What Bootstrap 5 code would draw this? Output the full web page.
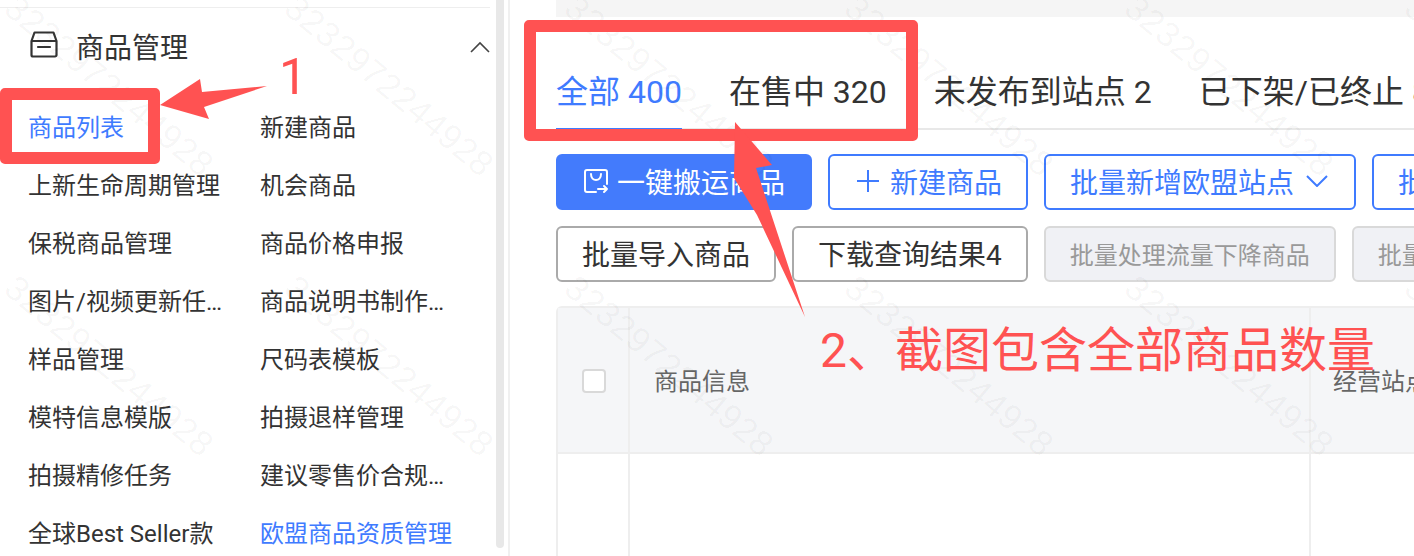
<!DOCTYPE html>
<html lang="zh-CN">
<head>
<meta charset="utf-8">
<title>商品列表</title>
<link href="https://cdn.jsdelivr.net/npm/bootstrap@5.3.0/dist/css/bootstrap.min.css" rel="stylesheet">
<style>
html,body{height:556px;overflow:hidden}
body{font-family:Roboto,"Noto Sans CJK SC","Liberation Sans",sans-serif;color:#333;background:#fff;position:relative;line-height:1.4}
.pg{width:1414px;height:556px;overflow:hidden}
.side{width:496px;flex:none;padding-top:7px}
.side-top{height:1px;background:#eee;margin-right:6px}
.side-head{height:78px;padding:0 6px 0 30px;font-size:28px;color:#333}
.side-head .boxi{margin:0 18px 6px 0}
.side-ttl{padding-top:4px}
.menu-grid{display:grid;grid-template-columns:232px 232px;padding-left:28px;margin-top:13px}
.menu-item{height:58px;line-height:58px;font-size:24px;color:#333;width:196px;text-decoration:none;white-space:nowrap;overflow:hidden;text-overflow:ellipsis}
.menu-item.on{color:#3f7bff}
.sbar{width:8px;height:548px;background:#e8e8e8;border-radius:0 0 4px 4px;flex:none}
.sline{width:2px;margin-left:4px;background:#f0f0f0;flex:none}
.mainp{flex:1 1 auto;min-width:0;overflow:hidden}
.topb{height:17px;background:#f5f5f5;margin-left:46px}
.tabsb{margin:42px 0 0 46px;height:71px;border-bottom:2px solid #e8e8e8;flex-wrap:nowrap;gap:47px;width:1200px}
.tabi{font-size:32px;line-height:66px;height:71px;color:#333;white-space:nowrap;padding:0;text-decoration:none;flex:none}
.tabi.on{color:#3f7bff;border-bottom:2px solid #3f7bff}
.btnrow{margin:24px 0 0 46px;gap:16px;flex-wrap:nowrap;width:1200px}
.btnrow+.btnrow{margin-top:16px}
.bx{height:56px;padding:4px 24px 0;font-size:28px;line-height:1;border-width:2px;border-radius:6px;flex:none;white-space:nowrap;display:inline-flex;align-items:center;--bs-btn-color:#3f7bff;--bs-btn-border-color:#3f7bff}
.bx svg{position:relative;top:-3px}
.bx.solid{background:#437bfc;border-color:#437bfc;color:#fff;padding:4px 25px 0}
.bx.ghost{border-color:#aaa;color:#333;background:#fff}
.bx.dis{background:#f0f1f5;border-color:#d9d9d9;color:#999;font-size:24px;opacity:1}
.ic-plus{margin:0 11px 0 3px}
.ic-chev{margin:0 2px 0 12px}
.tblw{margin:24px 0 0 46px;width:1000px;border:2px solid #eee;border-bottom:0;border-radius:6px 6px 0 0;height:260px}
.colck{width:72px;flex:none;border-right:2px solid #eee;padding:2px 0 0 2px}
.colinf{width:681px;flex:none;border-right:2px solid #eee;padding:5px 0 0 24px}
.hrow{height:146px;background:#f5f6f8;border-bottom:2px solid #eee;font-size:24px;color:#666}
.brow{height:110px}
.ckb{width:24px;height:24px;border:2px solid #d9d9d9;background:#fff;border-radius:4px}
.lastc{padding:5px 0 0 22px;white-space:nowrap}
.wm{position:absolute;left:-30px;top:-55px;width:1680px;display:flex;flex-wrap:wrap;pointer-events:none}
.wmc{width:280px;height:280px;display:flex;align-items:center;justify-content:center}
.wmc span{transform:rotate(40deg);font-size:35px;color:rgba(0,0,0,.04);white-space:nowrap;font-family:"Liberation Sans",sans-serif;letter-spacing:.5px}
.mk{position:absolute;border:12px solid #ff5252;border-radius:5px;pointer-events:none}
.mk1{left:0;top:88px;width:160px;height:76px}
.mk2{left:524px;top:20px;width:394px;height:121px}
.arrs{position:absolute;left:0;top:0;pointer-events:none}
.nt{position:absolute;color:#ff5252;line-height:1;white-space:nowrap}
.nt1{left:279px;top:52px;font-size:50px}
.nt2{left:820px;top:327px;font-size:48px}
</style>
</head>
<body>
<div class="pg d-flex">
  <aside class="side">
    <div class="side-top"></div>
    <div class="side-head d-flex align-items-center">
      <svg class="boxi" width="28" height="27" viewBox="0 0 28 27" fill="none" stroke="#333" stroke-width="2.2" stroke-linejoin="round" stroke-linecap="round"><path d="M1.5 10V24a1.5 1.5 0 0 0 1.5 1.5h22a1.5 1.5 0 0 0 1.5-1.5V10L23.5 1.5H4.5ZM1.5 10h25M8 16h12"/></svg>
      <span class="side-ttl">商品管理</span>
      <svg class="ms-auto" width="20" height="12" viewBox="0 0 20 12" fill="none" stroke="#444" stroke-width="1.6"><path d="M1 11 10 2l9 9"/></svg>
    </div>
    <nav class="menu-grid">
      <a class="menu-item on" href="#">商品列表</a><a class="menu-item" href="#">新建商品</a>
      <a class="menu-item" href="#">上新生命周期管理</a><a class="menu-item" href="#">机会商品</a>
      <a class="menu-item" href="#">保税商品管理</a><a class="menu-item" href="#">商品价格申报</a>
      <a class="menu-item" href="#">图片/视频更新任务</a><a class="menu-item" href="#">商品说明书制作工具</a>
      <a class="menu-item" href="#">样品管理</a><a class="menu-item" href="#">尺码表模板</a>
      <a class="menu-item" href="#">模特信息模版</a><a class="menu-item" href="#">拍摄退样管理</a>
      <a class="menu-item" href="#">拍摄精修任务</a><a class="menu-item" href="#">建议零售价合规管理</a>
      <a class="menu-item" href="#">全球Best Seller款</a><a class="menu-item on" href="#">欧盟商品资质管理</a>
    </nav>
  </aside>
  <div class="sbar"></div>
  <div class="sline"></div>
  <main class="mainp">
    <div class="topb"></div>
    <div class="nav tabsb">
      <a class="tabi on" href="#">全部 400</a>
      <a class="tabi" href="#">在售中 320</a>
      <a class="tabi" href="#">未发布到站点 2</a>
      <a class="tabi" href="#">已下架/已终止 8</a>
    </div>
    <div class="d-flex btnrow">
      <button class="btn bx solid" type="button">
        <svg class="me-2" width="26" height="26" viewBox="0 0 26 26" fill="none" stroke="#fff" stroke-width="2" stroke-linecap="round" stroke-linejoin="round"><path d="M13 24H4a2 2 0 0 1-2-2V4a2 2 0 0 1 2-2h18a2 2 0 0 1 2 2v12M8 6c0 8 10 8 10 0M15 21h9M21 18l3 3-3 3"/></svg>
        一键搬运商品</button>
      <button class="btn btn-outline-primary bx" type="button">
        <svg class="ic-plus" width="22" height="22" viewBox="0 0 22 22" fill="none" stroke="#3f7bff" stroke-width="2"><path d="M11 0v22M0 11h22"/></svg>新建商品</button>
      <button class="btn btn-outline-primary bx" type="button">批量新增欧盟站点<svg class="ic-chev" width="22" height="12" viewBox="0 0 22 12" fill="none" stroke="#3f7bff" stroke-width="2"><path d="M1 1l10 10L21 1"/></svg></button>
      <button class="btn btn-outline-primary bx" type="button">批量操作</button>
    </div>
    <div class="d-flex btnrow">
      <button class="btn bx ghost" type="button">批量导入商品</button>
      <button class="btn bx ghost" type="button">下载查询结果4</button>
      <button class="btn bx dis" type="button">批量处理流量下降商品</button>
      <button class="btn bx dis" type="button">批量处理</button>
    </div>
    <div class="tblw">
      <div class="d-flex hrow">
        <div class="colck d-flex align-items-center justify-content-center"><div class="ckb"></div></div>
        <div class="colinf d-flex align-items-center">商品信息</div>
        <div class="lastc d-flex align-items-center">经营站点</div>
      </div>
      <div class="d-flex brow">
        <div class="colck"></div>
        <div class="colinf"></div>
      </div>
    </div>
  </main>
</div>
<div class="wm">
  <div class="wmc"><span>3232972244928</span></div><div class="wmc"><span>3232972244928</span></div><div class="wmc"><span>3232972244928</span></div><div class="wmc"><span>3232972244928</span></div><div class="wmc"><span>3232972244928</span></div><div class="wmc"><span>3232972244928</span></div>
  <div class="wmc"><span>3232972244928</span></div><div class="wmc"><span>3232972244928</span></div><div class="wmc"><span>3232972244928</span></div><div class="wmc"><span>3232972244928</span></div><div class="wmc"><span>3232972244928</span></div><div class="wmc"><span>3232972244928</span></div>
  <div class="wmc"><span>3232972244928</span></div><div class="wmc"><span>3232972244928</span></div><div class="wmc"><span>3232972244928</span></div><div class="wmc"><span>3232972244928</span></div><div class="wmc"><span>3232972244928</span></div><div class="wmc"><span>3232972244928</span></div>
</div>
<div class="mk mk1"></div>
<div class="mk mk2"></div>
<svg class="arrs" width="1414" height="556" viewBox="0 0 1414 556">
  <polygon fill="#ff5252" points="160,105 200,79 202,92 267,86 204,107 209,119"/>
  <polygon fill="#ff5252" points="735,122 772,165 756,168 805,317 757,215 734,178"/>
</svg>
<div class="nt nt1">1</div>
<div class="nt nt2">2、截图包含全部商品数量</div>
<script src="https://cdn.jsdelivr.net/npm/bootstrap@5.3.0/dist/js/bootstrap.bundle.min.js"></script>
</body>
</html>
